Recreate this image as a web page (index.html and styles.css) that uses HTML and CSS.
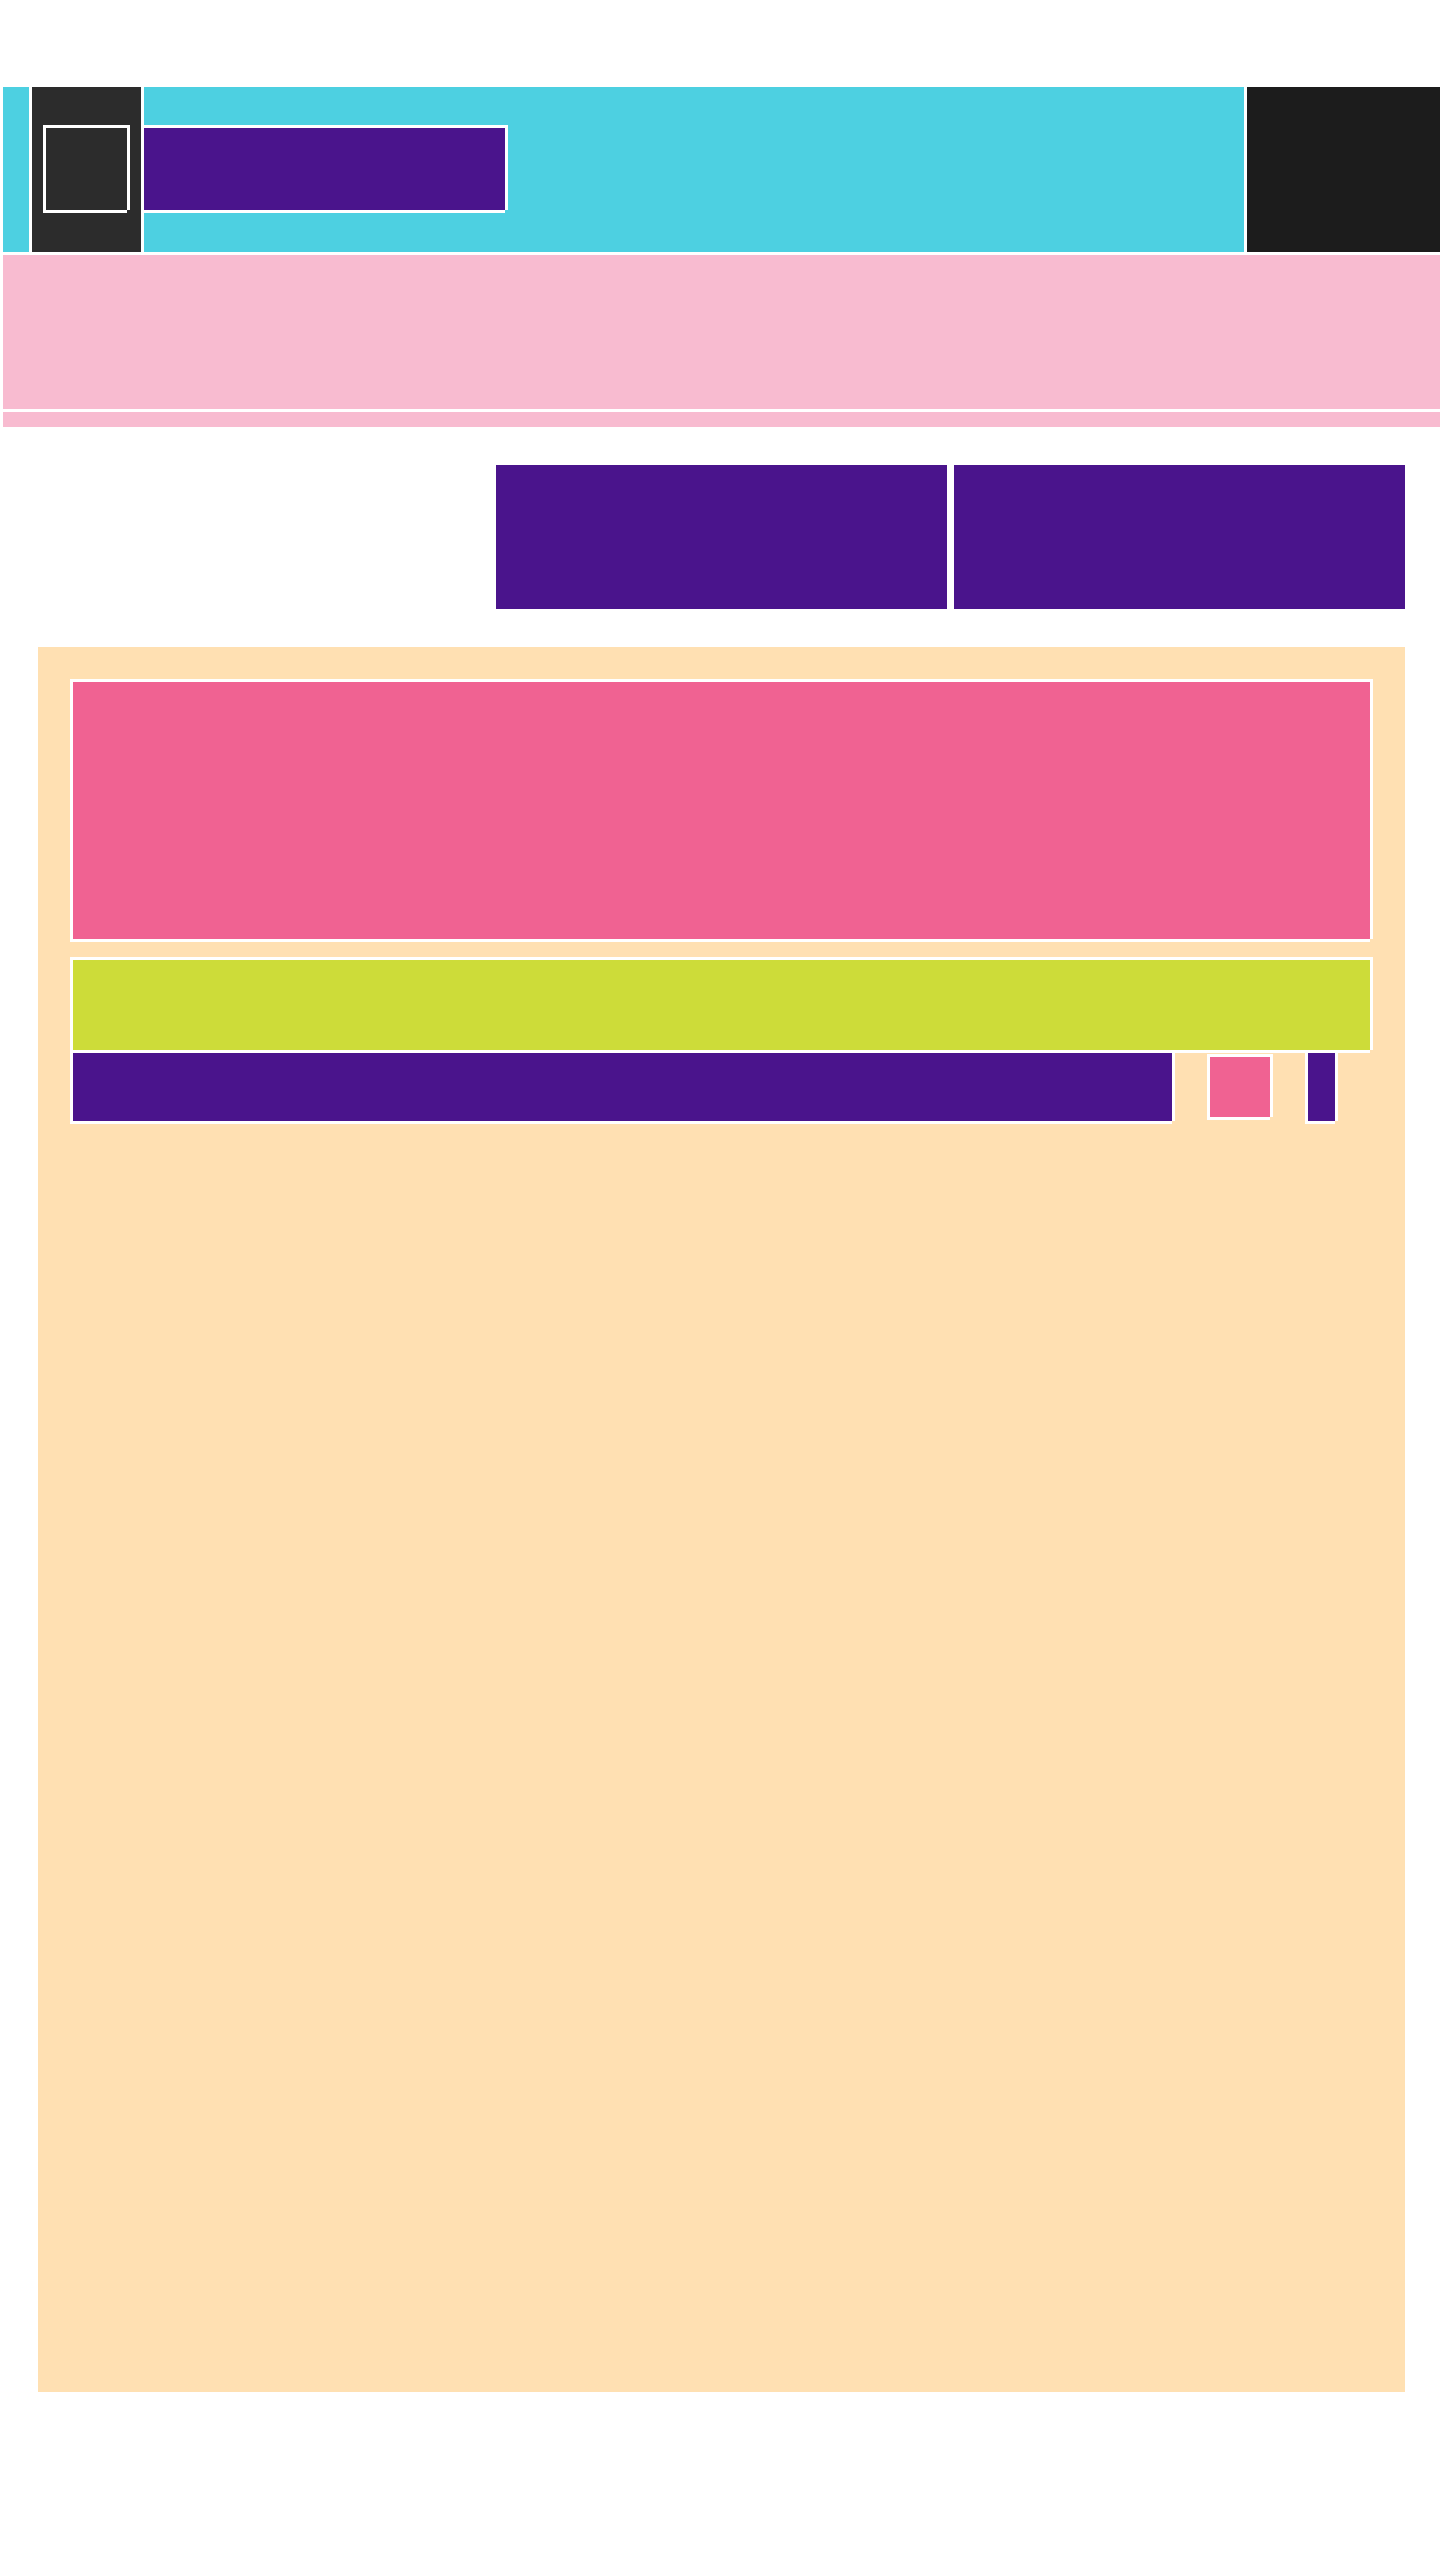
FILE: index.html
```html
<!DOCTYPE html>
<html lang="en">
  <head>
    <meta charset="UTF-8" />
    <meta name="viewport" content="width=device-width, initial-scale=1.0" />
    <title>Layout</title>
    <link rel="stylesheet" href="styles.css">
  </head>
  <body>
    <header class="topbar">
      <div class="brand">
        <div class="brand-mark frame"></div>
      </div>
      <div class="title-bar frame"></div>
      <div class="topbar-side"></div>
    </header>

    <section class="hero"></section>
    <div class="hero-strip"></div>

    <main class="content">
      <div class="actions">
        <div class="action"></div>
        <div class="action"></div>
      </div>

      <div class="panel">
        <div class="card card-media frame"></div>
        <div class="card card-bar frame"></div>
        <div class="row">
          <div class="row-main frame"></div>
          <div class="row-thumb frame"></div>
          <div class="row-tag frame"></div>
        </div>
      </div>
    </main>
  </body>
</html>
```

FILE: styles.css
```css
* {
  box-sizing: border-box;
}
body {
  margin: 0;
  padding: 87px 0 0 3px;
  background-color: #fff;
  font-family: "Liberation Sans", Arial, sans-serif;
}

/* white edge on top/left, shadow fills right and bottom */
.frame {
  border-top: 3px solid #fff;
  border-left: 3px solid #fff;
  box-shadow: 3px 0 0 #fff, 0 3px 0 #fff;
}

/* Top bar */
.topbar {
  display: flex;
  height: 165px;
  padding-left: 26px;
  background-color: #4dd0e1;
}
.brand {
  display: flex;
  align-items: center;
  width: 115px;
  padding-left: 11px;
  background-color: #2c2c2c;
  border-left: 3px solid #fff;
  border-right: 3px solid #fff;
}
.brand-mark {
  width: 84px;
  height: 85px;
  margin-bottom: 4px;
  background-color: #2c2c2c;
}
.title-bar {
  align-self: center;
  width: 361px;
  height: 85px;
  margin-bottom: 4px;
  border-left: 0;
  background-color: #4a148c;
}
.topbar-side {
  width: 196px;
  margin-left: auto;
  background-color: #1c1c1c;
  border-left: 3px solid #fff;
}

/* Hero */
.hero {
  height: 154px;
  margin-top: 3px;
  background-color: #f8bbd0;
}
.hero-strip {
  height: 15px;
  margin-top: 3px;
  background-color: #f8bbd0;
}

/* Main content */
.content {
  padding: 38px 35px 0;
}
.actions {
  display: flex;
  justify-content: flex-end;
  gap: 7px;
}
.action {
  width: 451px;
  height: 144px;
  background-color: #4a148c;
}

.panel {
  height: 1745px;
  margin-top: 38px;
  padding: 32px 35px 0 32px;
  background-color: #ffe0b2;
}
.card-media {
  height: 260px;
  margin-bottom: 18px;
  background-color: #f06292;
}
.card-bar {
  height: 93px;
  background-color: #cddc39;
}

.row {
  display: flex;
  align-items: center;
  gap: 35px;
}
.row-main {
  width: 1102px;
  height: 71px;
  background-color: #4a148c;
}
.row-thumb {
  width: 63px;
  height: 63px;
  background-color: #f06292;
}
.row-tag {
  width: 30px;
  height: 71px;
  background-color: #4a148c;
}
```
